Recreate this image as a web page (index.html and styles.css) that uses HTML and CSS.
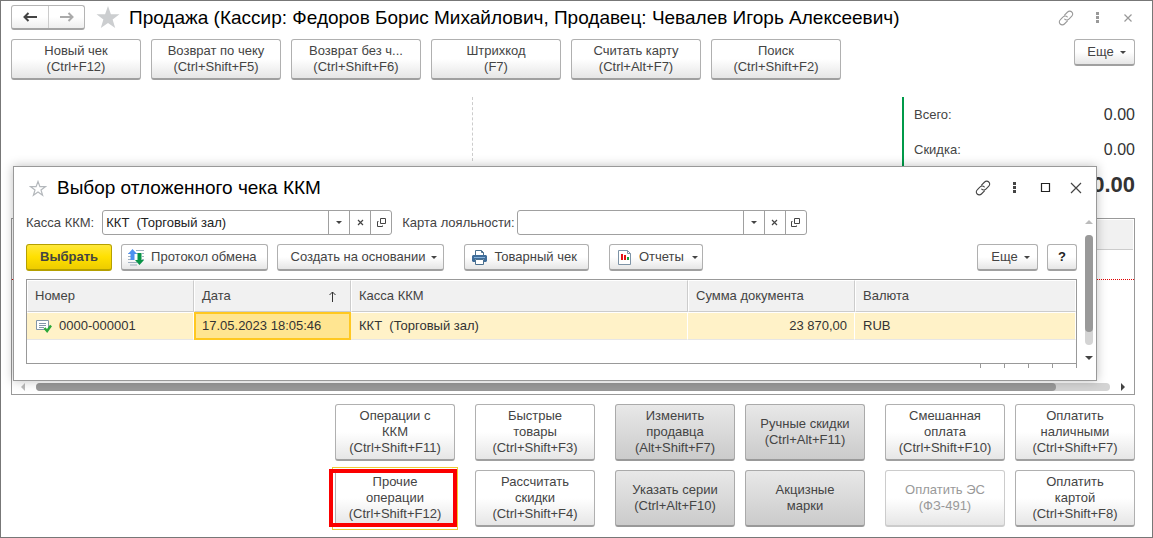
FILE: index.html
```html
<!DOCTYPE html>
<html lang="ru">
<head>
<meta charset="utf-8">
<title>Продажа</title>
<link rel="stylesheet" href="styles.css">
</head>
<body>
<svg class="defs" aria-hidden="true">
  <symbol id="link" viewBox="0 0 16 16"><g fill="none" stroke="currentColor" stroke-width="1.1" stroke-linecap="round"><path d="M6.500 5.100 9.600 2a2.900 2.900 0 0 1 4.200 0 2.900 2.900 0 0 1 0 4.200L10.900 9.100a2.900 2.900 0 0 1-4.200 0"/><path d="M9.500 10.900 6.400 14a2.900 2.900 0 0 1-4.200 0 2.900 2.900 0 0 1 0-4.200L5.100 6.900a2.900 2.900 0 0 1 4.200 0"/></g></symbol>
  <symbol id="dots" viewBox="0 0 14 14"><path fill="currentColor" d="M6 1h3v3H6zM6 5h3v3H6zM6 9h3v3H6z"/></symbol>
  <symbol id="open" viewBox="0 0 11 11"><path fill="none" stroke="currentColor" d="M4.500 1.500h5v5h-5zM2.500 4.500h-1v5h5v-1"/></symbol>
  <symbol id="clear" viewBox="0 0 11 11"><path fill="none" stroke="currentColor" stroke-width="1.200" d="m3 3 5 5M8 3 3 8"/></symbol>
</svg>
<main class="app">
  <header class="head">
    <div class="nav">
      <button aria-label="Назад"><svg width="16" height="12" viewBox="0 0 16 12"><path fill="none" stroke="#444" stroke-width="2" d="M15 6H3M6.500 2 2.500 6l4 4"/></svg></button>
      <button aria-label="Вперед"><svg width="16" height="12" viewBox="0 0 16 12"><path fill="none" stroke="#aaa" stroke-width="2" d="M1 6h12M9.500 2l4 4-4 4"/></svg></button>
    </div>
    <svg class="star" width="24" height="23" viewBox="0 0 24 23"><path fill="#ccced0" d="m12 0 2.900 8.300H23.500l-6.900 5.200L19.200 22 12 16.900 4.800 22l2.600-8.500L.5 8.300h8.600z"/></svg>
    <h1>Продажа (Кассир: Федоров Борис Михайлович, Продавец: Чевалев Игорь Алексеевич)</h1>
    <div class="wins muted">
      <button aria-label="Ссылка"><svg width="16" height="16"><use href="#link"/></svg></button>
      <button aria-label="Меню"><svg width="14" height="14"><use href="#dots"/></svg></button>
      <button aria-label="Закрыть"><svg width="16" height="16" viewBox="0 0 16 16"><path stroke="currentColor" stroke-width="1.200" d="m4.500 4.500 7 7M11.500 4.500l-7 7"/></svg></button>
    </div>
  </header>

  <div class="toolbar">
    <button class="btn tile">Новый чек<br>(Ctrl+F12)</button>
    <button class="btn tile">Возврат по чеку<br>(Ctrl+Shift+F5)</button>
    <button class="btn tile">Возврат без ч...<br>(Ctrl+Shift+F6)</button>
    <button class="btn tile">Штрихкод<br>(F7)</button>
    <button class="btn tile">Считать карту<br>(Ctrl+Alt+F7)</button>
    <button class="btn tile">Поиск<br>(Ctrl+Shift+F2)</button>
    <button class="btn more">Еще<i class="caret"></i></button>
  </div>

  <section class="info">
    <div class="split"></div>
    <dl class="totals">
      <div><dt>Всего:</dt><dd>0.00</dd></div>
      <div><dt>Скидка:</dt><dd>0.00</dd></div>
      <div class="sum"><dd>0.00</dd></div>
    </dl>
  </section>

  <section class="goods">
    <div class="goods-head"></div>
    <div class="goods-row"></div>
    <div class="hscroll"><i class="arr left"></i><div class="track"><div class="thumb"></div></div><i class="arr right"></i></div>
  </section>

  <div class="actions">
    <div class="group one">
      <button class="btn">Операции с<br>ККМ<br>(Ctrl+Shift+F11)</button>
      <div class="marked"><button class="btn">Прочие<br>операции<br>(Ctrl+Shift+F12)</button></div>
    </div>
    <div class="group one">
      <button class="btn">Быстрые<br>товары<br>(Ctrl+Shift+F3)</button>
      <button class="btn">Рассчитать<br>скидки<br>(Ctrl+Shift+F4)</button>
    </div>
    <div class="group">
      <button class="btn dark">Изменить<br>продавца<br>(Alt+Shift+F7)</button>
      <button class="btn dark">Ручные скидки<br>(Ctrl+Alt+F11)</button>
      <button class="btn dark">Указать серии<br>(Ctrl+Alt+F10)</button>
      <button class="btn dark">Акцизные<br>марки</button>
    </div>
    <div class="group">
      <button class="btn">Смешанная<br>оплата<br>(Ctrl+Shift+F10)</button>
      <button class="btn">Оплатить<br>наличными<br>(Ctrl+Shift+F7)</button>
      <button class="btn" disabled>Оплатить ЭС<br>(ФЗ-491)</button>
      <button class="btn">Оплатить<br>картой<br>(Ctrl+Shift+F8)</button>
    </div>
  </div>

  <section class="dialog" role="dialog" aria-labelledby="dlg-title">
    <header class="dlg-head">
      <svg class="star" width="18" height="17" viewBox="0 0 18 17"><path fill="none" stroke="#b4b8bc" stroke-width="1.200" d="m9 1.500 1.900 5.200h5.400L12 10l1.600 5.300L9 12.100l-4.600 3.200L6 10 1.700 6.700h5.400z"/></svg>
      <h2 id="dlg-title">Выбор отложенного чека ККМ</h2>
      <div class="wins">
        <button aria-label="Ссылка"><svg width="16" height="16"><use href="#link"/></svg></button>
        <button aria-label="Меню"><svg width="14" height="14"><use href="#dots"/></svg></button>
        <button aria-label="Развернуть"><svg width="16" height="16" viewBox="0 0 16 16"><path fill="none" stroke="#222" stroke-width="1.200" d="M4.500 3.500h8v8h-8z"/></svg></button>
        <button aria-label="Закрыть"><svg width="16" height="16" viewBox="0 0 16 16"><path stroke="currentColor" stroke-width="1.200" d="m3 3 10 10M13 3 3 13"/></svg></button>
      </div>
    </header>
    <div class="dlg-main">
      <div class="dlg-content">
        <div class="fields">
          <label for="kassa">Касса ККМ:</label>
          <div class="field"><input id="kassa" value="ККТ  (Торговый зал)"><button aria-label="Список"><i class="caret"></i></button><button aria-label="Очистить"><svg width="11" height="11"><use href="#clear"/></svg></button><button aria-label="Открыть"><svg width="11" height="11"><use href="#open"/></svg></button></div>
          <label for="card" class="second">Карта лояльности:</label>
          <div class="field"><input id="card"><button aria-label="Список"><i class="caret"></i></button><button aria-label="Очистить"><svg width="11" height="11"><use href="#clear"/></svg></button><button aria-label="Открыть"><svg width="11" height="11"><use href="#open"/></svg></button></div>
        </div>
        <div class="commands">
          <button class="btn primary">Выбрать</button>
          <button class="btn icon"><svg width="17" height="17" viewBox="0 0 17 17"><path stroke="#9fb0c0" d="M0 4.500h3M0 7.500h3M0 10.500h3M0 13.500h9M2 16h7M8 1.500h8M8 4.500h2M14 4.500h2M14 7.500h2M14 10.500h2"/><path fill="#4d90f0" d="M4.500 0 9 5H6.500v6h-4V5H0z"/><path fill="#089347" d="M9.500 4h4v7H16l-4.500 5L7 11h2.500z"/></svg>Протокол обмена</button>
          <button class="btn menu">Создать на основании<i class="caret"></i></button>
          <button class="btn print apart"><svg width="15" height="15" viewBox="0 0 15 15"><path fill="#fff" stroke="#4b708e" d="M3.500 6V.5h6l2 2V6"/><path fill="none" stroke="#4b708e" d="M9.500.5v2h2"/><path fill="#3f6d9a" d="M1 5h13l1 1v5l-1 1h-2V9H3v3H1l-1-1V6z"/><path fill="#86b2db" d="M2 7h11v1H2z"/><path fill="#fff" stroke="#4b708e" d="M3.500 9.500h8v5h-8z"/></svg>Товарный чек</button>
          <button class="btn reports apart"><svg width="13" height="15" viewBox="0 0 13 15"><path fill="#fff" stroke="#7d93a6" d="M.5.500h9l3 3v11H.5z"/><path fill="none" stroke="#7d93a6" d="M9.500.5v3h3"/><path fill="#e51414" d="M3 4h2v6H3zM6 5h2v5H6z"/><path fill="#14a03c" d="M9 7h2v3H9z"/></svg>Отчеты<i class="caret"></i></button>
          <button class="btn more">Еще<i class="caret"></i></button>
          <button class="btn help">?</button>
        </div>
        <div class="list">
          <table>
            <colgroup><col class="c-num"><col class="c-date"><col><col class="c-sum"><col class="c-cur"></colgroup>
            <thead><tr><th>Номер</th><th><span class="sorted">Дата<svg width="7" height="11" viewBox="0 0 7 11"><path fill="none" stroke="#333" d="M3.500 11V1M.5 4l3-3 3 3"/></svg></span></th><th>Касса ККМ</th><th>Сумма документа</th><th>Валюта</th></tr></thead>
            <tbody><tr><td><span class="doc"><svg width="16" height="13" viewBox="0 0 16 13"><path fill="#fff" stroke="#8296a8" d="M.5.500h12v9H.5z"/><path stroke="#8296a8" d="M3 3.500h7M3 5.500h7M3 7.500h5"/><path fill="none" stroke="#2ba83a" stroke-width="2.400" d="m8.500 8 2.600 3L15 5.500"/></svg>0000-000001</span></td><td class="current">17.05.2023 18:05:46</td><td class="pre">ККТ  (Торговый зал)</td><td class="num">23 870,00</td><td>RUB</td></tr></tbody>
          </table>
        </div>
        <div class="ticks"><i></i><i></i><i></i><i></i><i></i></div>
      </div>
      <div class="vscroll"><i class="arr up"></i><div class="track"><div class="thumb"></div></div><i class="arr down"></i></div>
    </div>
  </section>
</main>
</body>
</html>
```
FILE: styles.css
```css
* { box-sizing: border-box; }
body { margin: 0; font: 13px/16px "Liberation Sans", Arial, sans-serif; color: #444; background: #fff; }
button, input { font: inherit; color: inherit; margin: 0; }
h1, h2, dl, dd { margin: 0; }
svg { display: block; flex: none; }
.defs { position: absolute; width: 0; height: 0; }

.app { position: relative; display: flex; flex-direction: column; min-height: 100vh; padding: 4px 17px 10px 10px; border: 1px solid #777; }

.btn { display: flex; align-items: center; justify-content: center; padding: 0 8px; border: 1px solid #b0b0b0; border-bottom: 2px solid #a0a0a0; border-radius: 3px; background: linear-gradient(#fff 50%, #e6e6e6); white-space: nowrap; }
.caret { width: 0; height: 0; border: 3px solid transparent; border-top-color: #444; border-bottom: 0; }

.head { display: flex; align-items: center; height: 25px; }
.nav { display: flex; border: 1px solid #b4b4b4; border-bottom: 2px solid #a4a4a4; border-radius: 3px; background: linear-gradient(#fff 50%, #eee); }
.nav button { display: flex; align-items: center; justify-content: center; width: 36px; height: 22px; padding: 0; border: 0; background: none; }
.nav button + button { border-left: 1px solid #ccc; }
.head .star { margin: 0 9px 0 11px; }
h1, h2 { font-size: 19px; line-height: 24px; font-weight: 400; color: #000; white-space: nowrap; }
.wins { display: flex; margin-left: auto; color: #444; }
.wins button { display: flex; align-items: center; justify-content: center; width: 31px; height: 24px; padding: 0; border: 0; background: none; }
.muted { color: #999; margin-right: -8px; }

.toolbar { display: flex; align-items: flex-start; gap: 10px; margin-top: 9px; }
.tile { width: 130px; height: 41px; }
.more { width: 61px; height: 27px; gap: 6px; margin-left: auto; padding-left: 12px; }

.info { display: flex; height: 138px; padding-top: 17px; }
.split { width: 462px; height: 64px; border-right: 1px dashed #ccc; }
.totals { width: 233px; height: 105px; margin-left: auto; border-left: 2px solid #009a49; padding-left: 10px; }
.totals div { display: flex; align-items: center; justify-content: space-between; height: 35px; }
.totals dd { font-size: 16px; color: #333; }
.totals .sum { justify-content: flex-end; }
.totals .sum dd { font-size: 22px; font-weight: 700; }

.goods { display: flex; flex-direction: column; flex: 1; min-height: 176px; border: 1px solid #999; }
.goods-head { height: 30px; margin: 1px 1px 0; background: #f1f1f1; border-bottom: 1px solid #ccc; }
.goods-row { height: 30px; border-bottom: 1px dotted #e00000; }
.hscroll { display: flex; align-items: center; gap: 11px; margin-top: auto; padding: 0 9px 3px; }
.track { flex: 1; border-radius: 4px; background: #d4d4d4; }
.thumb { border-radius: 4px; background: #999; }
.hscroll .thumb { width: 95%; height: 8px; }
.arr { border: 4px solid transparent; flex: none; }
.arr.left { border-right-color: #bbb; border-left: 0; }
.arr.right { border-left-color: #444; border-right: 0; }
.arr.up { border-bottom-color: #bbb; border-top: 0; }
.arr.down { border-top-color: #444; border-bottom: 0; }

.actions { display: flex; justify-content: flex-end; gap: 20px; margin-top: 9px; }
.group { display: grid; grid-template-columns: 120px 120px; gap: 9px 10px; }
.group.one { grid-template-columns: 120px; }
.group .btn { width: 120px; height: 57px; padding: 0; }
.btn.dark { background: linear-gradient(#e8e8e8, #cbcbcb); border-color: #aaa; border-bottom-color: #999; }
.btn:disabled { color: #999; border-color: #ccc; }
.marked { position: relative; }
.marked::before { content: ""; position: absolute; inset: -3px; border: 1px solid #f0cc35; }
.marked::after { content: ""; position: absolute; inset: -1px -2px 0 -6px; border: 4px solid #fb0000; }

.dialog { position: absolute; top: 165px; left: 12px; right: 55px; padding: 0 3px 12px 12px; border: 1px solid #999; background: #fff; box-shadow: 0 0 10px rgba(0, 0, 0, .25); }
.dlg-head { display: flex; align-items: center; height: 42px; padding: 0 2px 0 3px; }
.dlg-head h2 { margin-left: 10px; }
.dlg-main { display: flex; gap: 8px; }
.dlg-content { flex: 1; min-width: 0; padding-top: 1px; }
.fields { display: flex; align-items: center; }
.fields label { margin-right: 8px; }
.fields .second { margin: 0 2px 0 10px; }
.field { display: flex; width: 290px; height: 25px; border: 1px solid #a0a0a0; border-radius: 3px; background: #fff; }
.field input { flex: 1; min-width: 0; padding: 0 3px; border: 0; background: none; color: #222; }
.field button { display: flex; align-items: center; justify-content: center; width: 21px; padding: 0; border: 0; border-left: 1px solid #a0a0a0; background: none; }
.commands { display: flex; gap: 9px; margin-top: 9px; }
.commands .btn { height: 27px; gap: 6px; padding: 0 12px; }
.commands .apart { margin-left: 11px; }
.commands .icon { padding: 0 10px 0 6px; }
.commands .menu { padding: 0 6px 0 13px; }
.commands .print { gap: 7px; padding: 0 11px 0 7px; }
.commands .reports { gap: 8px; padding: 0 4px 0 8px; }
.commands .more { margin-left: auto; padding-right: 6px; }
.commands .help { width: 30px; padding: 0; font-weight: 700; color: #222; }
.commands .primary { padding: 0 13px; font-weight: 700; border-color: #b5a000; background: linear-gradient(#ffe83c, #ffe000 50%, #edcc00); }

.list { height: 85px; margin-top: 8px; border: 1px solid #999; }
table { width: 100%; table-layout: fixed; border-collapse: separate; border-spacing: 0; }
.c-num { width: 167px; }
.c-date { width: 157px; }
.c-sum { width: 167px; }
.c-cur { width: 221px; }
th { height: 32px; padding: 0 7px; text-align: left; font-weight: 400; background: #f1f1f1; border: 1px solid #fff; border-right: 1px solid #ccc; border-bottom: 1px solid #ccc; }
th:last-child { border-right-color: #fff; }
.sorted { display: flex; align-items: center; justify-content: space-between; padding-right: 7px; }
td { height: 28px; padding: 0 7px; color: #333; background: #fff2c8; border: 1px solid #fff; border-left-width: 0; border-bottom-color: #e6e6e6; }
td:first-child { padding-left: 9px; }
td.current { border: 2px solid #ffc821; background: #ffe591; padding: 0 6px; }
.doc { display: flex; align-items: center; gap: 7px; }
td.pre { white-space: pre; padding-left: 8px; }
.num { text-align: right; }
td:last-child { padding-left: 8px; }
.ticks { display: flex; justify-content: flex-end; gap: 23px; }
.ticks i { width: 1px; height: 4px; background: #999; }
.vscroll { display: flex; flex-direction: column; align-items: center; gap: 11px; width: 8px; padding: 11px 0 8px; }
.vscroll .track { width: 8px; }
.vscroll .thumb { height: 88%; }
```
